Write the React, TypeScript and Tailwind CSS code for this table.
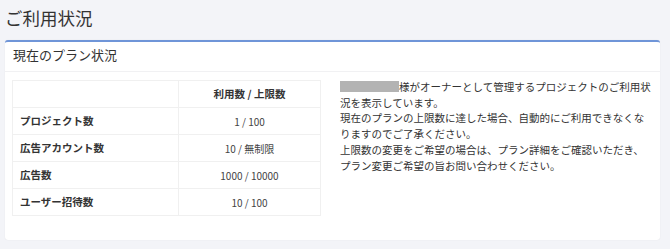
const rows = [
  { label: "プロジェクト数", value: "1 / 100" },
  { label: "広告アカウント数", value: "10 / 無制限" },
  { label: "広告数", value: "1000 / 10000" },
  { label: "ユーザー招待数", value: "10 / 100" },
];

export default function App() {
  return (
    <div
      className="min-h-screen bg-[#f3f4f8] text-[#333] pt-[6px] pb-[10px]"
      style={{ fontFamily: '"Noto Sans CJK JP", "Noto Sans", sans-serif' }}
    >
      <h1 className="ml-[5px] h-[34px] text-[17.5px] leading-[24px] font-normal">ご利用状況</h1>

      <section className="ml-[5px] mr-[10px] bg-white rounded-[3px] border-t-2 border-[#6f95d8] shadow-[0_0_1px_rgba(0,0,0,0.12)]">
        <div className="h-[30px] px-[8px] pb-[3px] flex items-center border-b border-[#f1f1f3]">
          <h2 className="text-[13px] leading-[18px] font-normal">現在のプラン状況</h2>
        </div>

        <div className="flex pl-[7px] pr-[6px] pt-[8px] pb-[24px]">
          {/* usage table */}
          <table className="w-[309px] border-collapse border border-[#f0f0f0] text-[10.5px] shrink-0">
            <thead>
              <tr className="h-[27px]">
                <th className="w-[166px] border border-[#f0f0f0]" />
                <th className="border border-[#f0f0f0] font-bold text-center">利用数 / 上限数</th>
              </tr>
            </thead>
            <tbody>
              {rows.map((r) => (
                <tr key={r.label} className="h-[27px]">
                  <td className="border border-[#f0f0f0] pl-[7px] font-bold">{r.label}</td>
                  <td className="border border-[#f0f0f0] text-center text-[10px] text-[#444]">{r.value}</td>
                </tr>
              ))}
            </tbody>
          </table>

          <div className="flex-1 pl-[19px] -mt-[1px] text-[10.5px] leading-[15.7px]">
            <p>
              <span className="inline-block align-[-1px] w-[59px] h-[11px] bg-[#b3b3b3]" />
              様がオーナーとして管理するプロジェクトのご利用状況を表示しています。
            </p>
            <p>現在のプランの上限数に達した場合、自動的にご利用できなくなりますのでご了承ください。</p>
            <p>上限数の変更をご希望の場合は、プラン詳細をご確認いただき、プラン変更ご希望の旨お問い合わせください。</p>
          </div>
        </div>
      </section>
    </div>
  );
}
